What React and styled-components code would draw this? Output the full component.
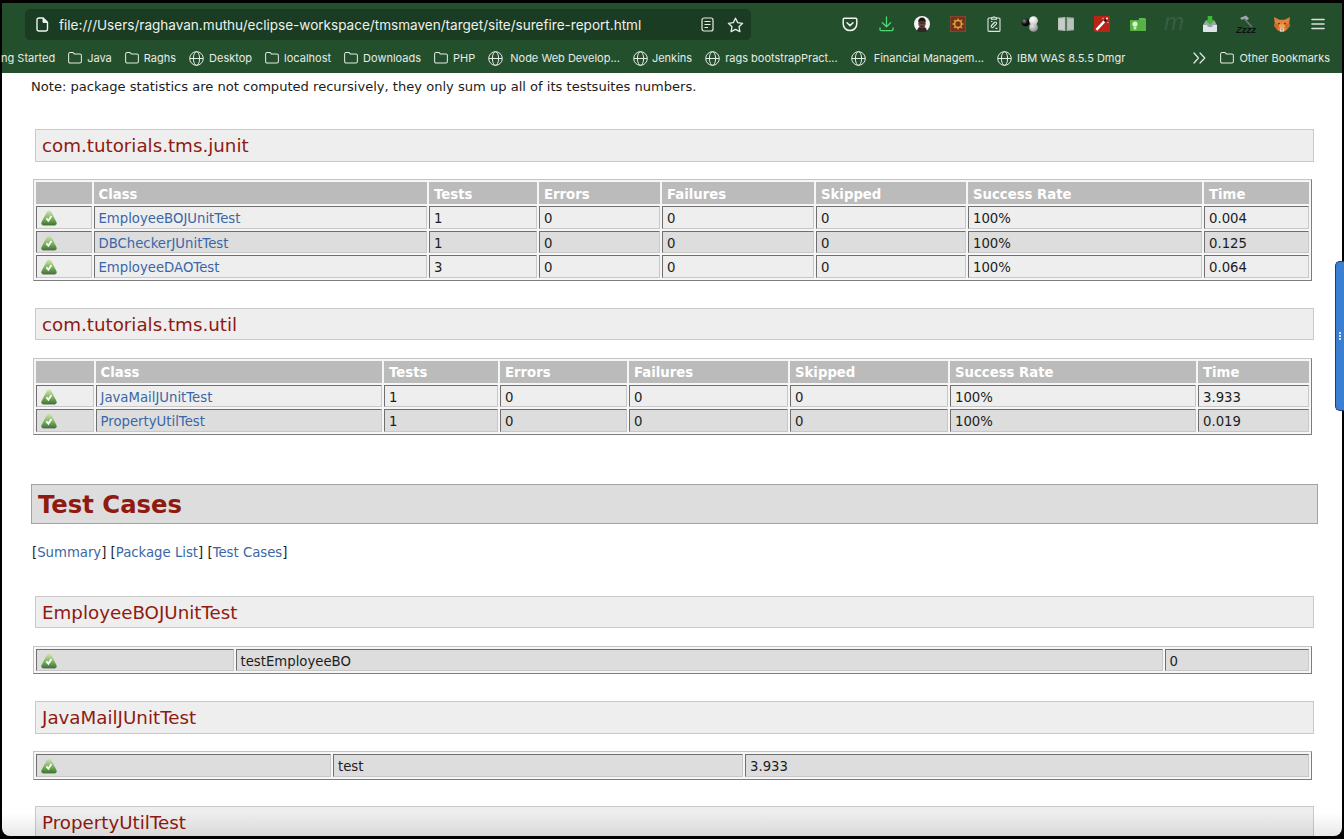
import React from "react";
import styled, { createGlobalStyle } from "styled-components";

const GlobalStyle = createGlobalStyle`
  html, body {
    margin: 0;
    padding: 0;
    height: 100%;
    overflow: hidden;
    background: #000;
  }
`;

const Frame = styled.div`
  position: relative;
  width: 1344px;
  height: 839px;
  box-sizing: border-box;
  padding: 3px 2px 3px 2px;
  display: flex;
  flex-direction: column;
  background: #000;
  overflow: hidden;
`;
const Chrome = styled.header`
  flex: none;
  height: 70px;
  background: #234f2d;
  color: #f1f4f1;
  font-family: Inter, "Liberation Sans", sans-serif;
`;
const Toolbar = styled.div`
  display: flex;
  align-items: center;
  justify-content: space-between;
  height: 42px;
  padding: 0 6px 0 23px;
`;
const UrlBar = styled.div`
  display: flex;
  align-items: center;
  width: 726px;
  height: 31px;
  margin-top: 1px;
  padding: 0 7px 0 11px;
  box-sizing: border-box;
  background: #1a3c22;
  border-radius: 5px;
`;
const UrlText = styled.span`
  flex: 1;
  margin-left: 10px;
  font-size: 13.55px;
  white-space: nowrap;
  color: #eef1ee;
`;
const UrlActions = styled.div`
  display: flex;
  align-items: center;
  gap: 13px;
`;
const ToolIcons = styled.div`
  display: flex;
`;
const ToolIcon = styled.div`
  width: 36px;
  height: 30px;
  display: flex;
  align-items: center;
  justify-content: center;
`;
const MarkM = styled.span`
  font: italic 400 24px "Liberation Sans", sans-serif;
  line-height: 20px;
  margin-top: -4px;
  color: #3b5c44;
`;
const Sleepy = styled.div`
  display: flex;
  flex-direction: column;
  align-items: center;
  line-height: 6px;
`;
const SleepyText = styled.span`
  font: italic 700 9.5px "Liberation Sans", sans-serif;
  line-height: 6px;
  color: #0c120d;
`;
const Bookmarks = styled.nav`
  display: flex;
  align-items: center;
  height: 26px;
  padding-right: 12px;
  font-size: 11px;
  color: #e6ebe6;
`;
const BookmarkGroup = styled.div`
  display: flex;
  align-items: center;
  gap: 13px;
  flex: 1;
  margin-left: -1px;
`;
const Bookmark = styled.span`
  display: flex;
  align-items: center;
  gap: ${(p) => p.$gap || 5}px;
  white-space: nowrap;
`;
const Overflow = styled.span`
  display: flex;
  margin-right: 14px;
`;

const Page = styled.main`
  position: relative;
  flex: 1;
  min-height: 0;
  overflow: hidden;
  background: #fff;
  border-radius: 0 0 8px 8px;
  padding: 4px 0 0 29px;
  font-family: "DejaVu Sans", Verdana, sans-serif;
  font-size: 13.25px;
  color: #1c1c1c;

  &::after {
    content: "";
    position: absolute;
    left: 0;
    right: 0;
    bottom: 0;
    height: 24px;
    background: linear-gradient(rgba(0, 0, 0, 0), rgba(0, 0, 0, 0.09));
  }
`;
const Note = styled.p`
  margin: 0 0 33px;
  font-size: 13.07px;
  line-height: 19px;
`;
const SectionTitle = styled.h3`
  box-sizing: border-box;
  width: 1279px;
  height: 32.6px;
  margin: 0 0 17.6px 4px;
  padding-left: 6px;
  background: #eee;
  border: 1px solid #c9c9c9;
  color: #8f1a10;
  font-size: 18.25px;
  font-weight: 400;
  line-height: 32px;
`;
const MainTitle = styled.h2`
  box-sizing: border-box;
  width: 1287px;
  height: 40px;
  margin: 48.5px 0 19px;
  padding-left: 6px;
  background: #ddd;
  border: 1px solid #a3a3a3;
  color: #8f1a10;
  font-size: 24.3px;
  font-weight: 700;
  line-height: 40px;
`;
const JumpLinks = styled.div`
  margin: 0 0 33px 1px;
  line-height: 20px;
`;
const Link = styled.a`
  color: #3a66a7;
  text-decoration: none;
`;
const Table = styled.table`
  table-layout: fixed;
  width: 1279px;
  margin: 0 0 26.5px 2px;
  box-sizing: border-box;
  border-collapse: separate;
  border-spacing: 2px;
  border: 1px solid;
  border-color: #c4c4c4 #7d7d7d #7d7d7d #c4c4c4;
  background: #f6f6f6;
`;
const Col = styled.col`
  width: ${(p) => p.$width}px;
`;
const HeadCell = styled.th`
  box-sizing: border-box;
  height: 21.9px;
  padding: 3px 5px 0;
  background: #bbb;
  color: #fff;
  font-weight: 700;
  text-align: left;
  line-height: 16px;
  white-space: nowrap;
`;
const Cell = styled.td`
  box-sizing: border-box;
  height: 22.7px;
  padding: 3px 4px 0;
  background: ${(p) => (p.$alt ? "#ddd" : "#eee")};
  border: 1px solid;
  border-color: #6f6f6f #c8c8c8 #c8c8c8 #6f6f6f;
  line-height: 16px;
  white-space: nowrap;
`;
const StatusWrap = styled.span`
  display: flex;
  align-items: center;
  margin-top: -2px;
`;
const ScrollHandle = styled.div`
  position: absolute;
  right: 0;
  top: 261px;
  width: 9px;
  height: 150px;
  box-sizing: border-box;
  background: #3a7fd1;
  border: 1px solid #1c3f70;
  border-right: none;
  border-radius: 5px 0 0 5px;
  display: flex;
  align-items: center;
  justify-content: center;
`;
const HandleDots = styled.span`
  width: 2px;
  height: 8px;
  background: repeating-linear-gradient(#d7e6f8 0 2px, transparent 2px 3px);
`;

/* ---------- drawn icons ---------- */

const PageIcon = () => (
  <svg width="13" height="15" viewBox="0 0 13 15" fill="none" stroke="#f1f4f1" strokeWidth="1.4">
    <path d="M2.8 1h4.4L11.5 5.3V12.2a1.8 1.8 0 0 1-1.8 1.8H2.8A1.8 1.8 0 0 1 1 12.2V2.8A1.8 1.8 0 0 1 2.8 1Z" strokeLinejoin="round" />
    <path d="M7 1.2V5.4h4.3" fill="#f1f4f1" strokeWidth="1" />
  </svg>
);
const ReaderIcon = () => (
  <svg width="13" height="15" viewBox="0 0 13 15" fill="none" stroke="#e8ece8" strokeWidth="1.2">
    <rect x="1" y="1" width="11" height="13" rx="2" />
    <path d="M3.5 4.5h6M3.5 7.5h6M3.5 10.5h3.5" />
  </svg>
);
const StarIcon = () => (
  <svg width="17" height="16" viewBox="0 0 17 16" fill="none" stroke="#e8ece8" strokeWidth="1.3" strokeLinejoin="round">
    <path d="M8.5 1.2 10.7 5.6 15.6 6.3 12 9.7 12.9 14.6 8.5 12.3 4.1 14.6 5 9.7 1.4 6.3 6.3 5.6Z" />
  </svg>
);
const PocketIcon = () => (
  <svg width="16" height="15" viewBox="0 0 16 15" fill="none" stroke="#f1f4f1" strokeWidth="1.5" strokeLinecap="round" strokeLinejoin="round">
    <path d="M2.4 1.2h11.2c.7 0 1.2.5 1.2 1.2v4.4a6.8 6.8 0 0 1-13.6 0V2.4c0-.7.5-1.2 1.2-1.2Z" />
    <path d="M5 5.8 8 8.6l3-2.8" />
  </svg>
);
const DownloadIcon = () => (
  <svg width="15" height="16" viewBox="0 0 15 16" fill="none" stroke="#4fd86f" strokeWidth="1.3" strokeLinecap="round" strokeLinejoin="round">
    <path d="M7.5 1v9.6M3.4 6.8l4.1 4 4.1-4" />
    <path d="M1 12v1.6c0 .6.4 1 1 1h11c.6 0 1-.4 1-1V12" />
  </svg>
);
const AvatarIcon = () => (
  <svg width="16" height="16" viewBox="0 0 16 16">
    <circle cx="8" cy="8" r="8" fill="#f4f4f4" />
    <path d="M3 15c.4-3.2 2.4-4.6 5-4.6s4.6 1.4 5 4.6a8 8 0 0 1-10 0Z" fill="#33262a" />
    <ellipse cx="8" cy="7.4" rx="3.7" ry="4.6" fill="#70483a" />
    <path d="M4.2 6.2C4.2 3 5.8 1.5 8 1.5s3.8 1.5 3.8 4.7C10.4 4.8 5.6 4.8 4.2 6.2Z" fill="#1d1512" />
    <path d="M5.5 7h5M6.5 10.3h3" stroke="#1d1512" strokeWidth=".9" />
  </svg>
);
const GearIcon = () => (
  <svg width="16" height="16" viewBox="0 0 16 16">
    <rect width="16" height="16" fill="#77301a" stroke="#8b6a55" strokeWidth=".8" />
    <circle cx="8" cy="8" r="3.4" fill="none" stroke="#dba53c" strokeWidth="1.5" />
    <path d="M8 2.5v2M8 11.5v2M2.5 8h2M11.5 8h2M4.1 4.1l1.4 1.4M10.5 10.5l1.4 1.4M11.9 4.1l-1.4 1.4M5.5 10.5l-1.4 1.4" stroke="#dba53c" strokeWidth="1.4" />
  </svg>
);
const ClipboardIcon = () => (
  <svg width="14" height="16" viewBox="0 0 14 16" fill="none" stroke="#dfe6df" strokeWidth="1.1">
    <rect x="1" y="2" width="12" height="13.4" rx="1" />
    <path d="M4.5 3.2V1.8h1.4a1.1 1.1 0 0 1 2.2 0h1.4v1.4Z" fill="#234f2d" />
    <path d="M4.6 9.2l3-3a1.3 1.3 0 0 1 1.8 1.8l-3.2 3.2a1.2 1.2 0 0 1-1.7-1.7l3-3" />
    <path d="M8.4 12.4h2M4 5.5h1.5" />
  </svg>
);
const BallsIcon = () => (
  <svg width="19" height="16" viewBox="0 0 19 16">
    <defs>
      <radialGradient id="ballLight" cx=".35" cy=".3" r=".8">
        <stop offset="0" stopColor="#fff" />
        <stop offset="1" stopColor="#c4c4c4" />
      </radialGradient>
      <radialGradient id="ballGrey" cx=".35" cy=".3" r=".8">
        <stop offset="0" stopColor="#e6e6e6" />
        <stop offset="1" stopColor="#858585" />
      </radialGradient>
      <radialGradient id="ballDark" cx=".35" cy=".3" r=".7">
        <stop offset="0" stopColor="#8a8a8a" />
        <stop offset=".6" stopColor="#151515" />
        <stop offset="1" stopColor="#000" />
      </radialGradient>
    </defs>
    <circle cx="12.5" cy="11.4" r="4.4" fill="url(#ballGrey)" />
    <circle cx="12.5" cy="4.6" r="4.4" fill="url(#ballLight)" />
    <circle cx="4.4" cy="6.4" r="3.8" fill="url(#ballDark)" />
  </svg>
);
const BookIcon = () => (
  <svg width="16" height="14" viewBox="0 0 16 14">
    <path d="M0 .8 7.4 0v14L0 13.2Z" fill="#b9c2bb" />
    <path d="M16 .8 8.6 0v14L16 13.2Z" fill="#a9b3ac" />
    <path d="M1 2h5.4v10.6L1 12Z" fill="#c7cec8" />
    <path d="M15 2H9.6v10.6L15 12Z" fill="#bac2bc" />
  </svg>
);
const WandIcon = () => (
  <svg width="16" height="16" viewBox="0 0 16 16">
    <rect width="16" height="16" fill="#b92419" />
    <path d="M2.4 13.8 10.6 5.2" stroke="#fff" strokeWidth="2.4" />
    <path d="M10.4 5.4 12.2 3.6" stroke="#3a1512" strokeWidth="2.2" />
    <circle cx="13" cy="2.6" r="1" fill="#fff" />
    <circle cx="9" cy="2.4" r=".7" fill="#f6c9c3" />
    <circle cx="14" cy="6.6" r=".7" fill="#f6c9c3" />
  </svg>
);
const GreenFolderIcon = () => (
  <svg width="16" height="13" viewBox="0 0 16 13">
    <path d="M9 0h5.5A1.5 1.5 0 0 1 16 1.5V13H1a1 1 0 0 1-1-1V2h9Z" fill="#5dbb4a" />
    <path d="M0 2h16v11H1a1 1 0 0 1-1-1Z" fill="#56b343" />
    <circle cx="5" cy="6" r="2.6" fill="#d9f5cf" />
    <rect x="3.6" y="8.4" width="2.8" height="3.2" rx=".5" fill="#c6ecbb" />
  </svg>
);
const InboxIcon = () => (
  <svg width="14" height="16" viewBox="0 0 14 16">
    <path d="M0 9 2.4 5h9.2L14 9v6a1 1 0 0 1-1 1H1a1 1 0 0 1-1-1Z" fill="#9aa6ad" />
    <path d="M0 9h4l1 2h4l1-2h4v6a1 1 0 0 1-1 1H1a1 1 0 0 1-1-1Z" fill="#dfe6ea" />
    <path d="M4.7 0h4.6v4h2.6L7 8.8 2.1 4h2.6Z" fill="#45b53a" />
  </svg>
);
const HammerIcon = () => (
  <svg width="16" height="12" viewBox="0 0 16 12">
    <path d="M2 3 8 .5l3 3L8.6 5.5 6.4 3.6 4 5Z" fill="#a2aaae" />
    <path d="M6.5 4l7.5 8" stroke="#6d7377" strokeWidth="1.7" />
  </svg>
);
const FoxIcon = () => (
  <svg width="16" height="16" viewBox="0 0 16 16">
    <path d="M0 1l5.4 2.8h5.2L16 1l-.8 6 .6 3-3.4 4.2L10 15.6H6L3.6 14.2.2 10l.6-3Z" fill="#e2813a" />
    <path d="M.8 7 5 8.4 3.6 14.2.2 10ZM15.2 7 11 8.4l1.4 5.8 3.4-4.2Z" fill="#c96d2b" />
    <path d="M5 8.4h6L9.8 12.4H6.2Z" fill="#f0a364" />
    <path d="M6.2 12.4h3.6L10 15.6H6Z" fill="#efe6dc" />
    <circle cx="5" cy="7.6" r=".8" fill="#3a2614" />
    <circle cx="11" cy="7.6" r=".8" fill="#3a2614" />
    <path d="M7 13.6h2L8 14.8Z" fill="#28201a" />
  </svg>
);
const MenuIcon = () => (
  <svg width="14" height="12" viewBox="0 0 14 12" stroke="#dce3dc" strokeWidth="1.6" strokeLinecap="round">
    <path d="M1 1.5h12M1 6h12M1 10.5h12" />
  </svg>
);
const FolderIcon = () => (
  <svg width="14" height="12" viewBox="0 0 15 13" fill="none" stroke="#e6ebe6" strokeWidth="1.1" strokeLinejoin="round">
    <path d="M.6 2.2c0-.9.6-1.6 1.5-1.6h2.8c.6 0 .9.2 1.2.6l.6.9h6.2c.9 0 1.5.7 1.5 1.5v6.6c0 1-.7 1.7-1.6 1.7H2.2c-.9 0-1.6-.7-1.6-1.7Z" />
  </svg>
);
const GlobeIcon = () => (
  <svg width="15" height="15" viewBox="0 0 15 15" fill="none" stroke="#e6ebe6" strokeWidth="1">
    <circle cx="7.5" cy="7.5" r="6.8" />
    <ellipse cx="7.5" cy="7.5" rx="3.1" ry="6.8" />
    <path d="M.8 7.5h13.4" />
  </svg>
);
const ChevronsIcon = () => (
  <svg width="13" height="12" viewBox="0 0 13 12" fill="none" stroke="#e6ebe6" strokeWidth="1.2" strokeLinecap="round" strokeLinejoin="round">
    <path d="M1 1l4.5 5L1 11M7 1l4.8 5L7 11" />
  </svg>
);
const SuccessIcon = () => (
  <svg width="16" height="16" viewBox="0 0 16 16">
    <defs>
      <linearGradient id="okFill" x1="0" y1="0" x2="0" y2="1">
        <stop offset="0" stopColor="#d3e6b6" />
        <stop offset=".5" stopColor="#86b765" />
        <stop offset="1" stopColor="#3c7830" />
      </linearGradient>
    </defs>
    <path d="M1.6 15.5h12.8" stroke="#a8a8a8" strokeWidth="1" />
    <path d="M6 1.6Q8-.4 10 1.6L15.4 12Q16.4 15 13.8 15H2.2Q-.4 15 .6 12Z" fill="url(#okFill)" />
    <path d="M5.4 8.4l2 2.4 3-4.8" fill="none" stroke="#fff" strokeWidth="1.8" />
  </svg>
);

/* ---------- data ---------- */

const toolIcons = [
  <PocketIcon />,
  <DownloadIcon />,
  <AvatarIcon />,
  <GearIcon />,
  <ClipboardIcon />,
  <BallsIcon />,
  <BookIcon />,
  <WandIcon />,
  <GreenFolderIcon />,
  <MarkM>m</MarkM>,
  <InboxIcon />,
  <Sleepy>
    <HammerIcon />
    <SleepyText>Zzzz</SleepyText>
  </Sleepy>,
  <FoxIcon />,
  <MenuIcon />,
];

const bookmarks = [
  { label: "ng Started" },
  { label: "Java", icon: "folder" },
  { label: "Raghs", icon: "folder" },
  { label: "Desktop", icon: "globe" },
  { label: "localhost", icon: "folder" },
  { label: "Downloads", icon: "folder" },
  { label: "PHP", icon: "folder" },
  { label: "Node Web Develop...", icon: "globe", gap: 7 },
  { label: "Jenkins", icon: "globe", gap: 4 },
  { label: "rags bootstrapPract...", icon: "globe" },
  { label: "Financial Managem...", icon: "globe", gap: 8 },
  { label: "IBM WAS 8.5.5 Dmgr", icon: "globe" },
];

const statHeads = ["", "Class", "Tests", "Errors", "Failures", "Skipped", "Success Rate", "Time"];

const packages = [
  {
    name: "com.tutorials.tms.junit",
    cols: [55.5, 333.5, 108, 121, 152, 150, 234, 105],
    rows: [
      ["EmployeeBOJUnitTest", "1", "0.004"],
      ["DBCheckerJUnitTest", "1", "0.125"],
      ["EmployeeDAOTest", "3", "0.064"],
    ],
  },
  {
    name: "com.tutorials.tms.util",
    cols: [57.5, 286.5, 114, 127, 159, 158, 246, 111],
    rows: [
      ["JavaMailJUnitTest", "1", "3.933"],
      ["PropertyUtilTest", "1", "0.019"],
    ],
  },
];

const cases = [
  { name: "EmployeeBOJUnitTest", cols: [197.5, 927, 144.5], test: "testEmployeeBO", time: "0" },
  { name: "JavaMailJUnitTest", cols: [295, 410, 564], test: "test", time: "3.933" },
];

const Status = () => (
  <StatusWrap>
    <SuccessIcon />
  </StatusWrap>
);

const Columns = ({ widths }) => (
  <colgroup>
    {widths.map((w, i) => (
      <Col key={i} $width={w} />
    ))}
  </colgroup>
);

const App = () => {
  return (
    <Frame>
      <GlobalStyle />
      <Chrome>
        <Toolbar>
          <UrlBar>
            <PageIcon />
            <UrlText>file:///Users/raghavan.muthu/eclipse-workspace/tmsmaven/target/site/surefire-report.html</UrlText>
            <UrlActions>
              <ReaderIcon />
              <StarIcon />
            </UrlActions>
          </UrlBar>
          <ToolIcons>
            {toolIcons.map((icon, i) => (
              <ToolIcon key={i}>{icon}</ToolIcon>
            ))}
          </ToolIcons>
        </Toolbar>
        <Bookmarks>
          <BookmarkGroup>
            {bookmarks.map((b) => (
              <Bookmark key={b.label} $gap={b.gap}>
                {b.icon === "folder" && <FolderIcon />}
                {b.icon === "globe" && <GlobeIcon />}
                {b.label}
              </Bookmark>
            ))}
          </BookmarkGroup>
          <Overflow>
            <ChevronsIcon />
          </Overflow>
          <Bookmark>
            <FolderIcon />
            Other Bookmarks
          </Bookmark>
        </Bookmarks>
      </Chrome>
      <Page>
        <Note>Note: package statistics are not computed recursively, they only sum up all of its testsuites numbers.</Note>
        {packages.map((pkg) => (
          <section key={pkg.name}>
            <SectionTitle>{pkg.name}</SectionTitle>
            <Table>
              <Columns widths={pkg.cols} />
              <thead>
                <tr>
                  {statHeads.map((h) => (
                    <HeadCell key={h}>{h}</HeadCell>
                  ))}
                </tr>
              </thead>
              <tbody>
                {pkg.rows.map(([name, tests, time], i) => (
                  <tr key={name}>
                    <Cell $alt={i % 2 === 1}>
                      <Status />
                    </Cell>
                    <Cell $alt={i % 2 === 1}>
                      <Link href="#">{name}</Link>
                    </Cell>
                    <Cell $alt={i % 2 === 1}>{tests}</Cell>
                    <Cell $alt={i % 2 === 1}>0</Cell>
                    <Cell $alt={i % 2 === 1}>0</Cell>
                    <Cell $alt={i % 2 === 1}>0</Cell>
                    <Cell $alt={i % 2 === 1}>100%</Cell>
                    <Cell $alt={i % 2 === 1}>{time}</Cell>
                  </tr>
                ))}
              </tbody>
            </Table>
          </section>
        ))}
        <MainTitle>Test Cases</MainTitle>
        <JumpLinks>
          [<Link href="#">Summary</Link>] [<Link href="#">Package List</Link>] [<Link href="#">Test Cases</Link>]
        </JumpLinks>
        {cases.map((c) => (
          <section key={c.name}>
            <SectionTitle>{c.name}</SectionTitle>
            <Table>
              <Columns widths={c.cols} />
              <tbody>
                <tr>
                  <Cell $alt>
                    <Status />
                  </Cell>
                  <Cell $alt>{c.test}</Cell>
                  <Cell $alt>{c.time}</Cell>
                </tr>
              </tbody>
            </Table>
          </section>
        ))}
        <SectionTitle>PropertyUtilTest</SectionTitle>
      </Page>
      <ScrollHandle>
        <HandleDots />
      </ScrollHandle>
    </Frame>
  );
};

export default App;
